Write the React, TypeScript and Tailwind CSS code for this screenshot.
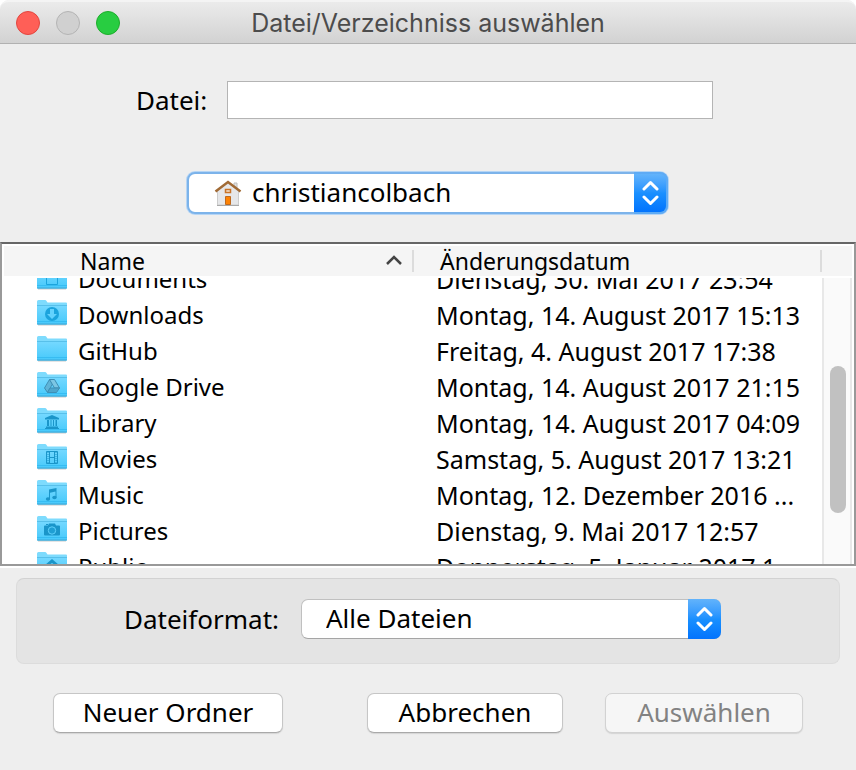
import { useLayoutEffect, useRef, type ReactNode } from "react";

type Entry = { name: string; date: string; glyph?: ReactNode };

const documentsGlyph = (
  <path d="M9.500 7.500h8l3 3v10h-11z" fill="none" stroke="#1ba4dd" />
);
const downloadsGlyph = (
  <>
    <circle cx="15" cy="14" r="7" fill="#1ba4dd" />
    <path d="M13 9h4v5h3l-5 5-5-5h3z" fill="#62d2fd" />
  </>
);
const driveGlyph = (
  <g stroke="#3f8fb5" strokeWidth="1" strokeLinejoin="round">
    <path d="M12.500 7.500 7.500 16l3 4.500 5-8.500z" fill="#5fb4d8" />
    <path d="M12.500 7.500h5l5 8.500h-5z" fill="#7cc6e4" />
    <path d="M13 16h9.500l-3 4.500h-9z" fill="#4da5cc" />
  </g>
);
const libraryGlyph = (
  <path
    d="M15 7l7 3v1.500H8V10zM10 12h2v6h-2zM13.500 12h1v6h-1zM16 12h1v6h-1zM18.500 12h1.500v6h-1.500zM9 18.500h12V20H9zM8 20h14v1H8z"
    fill="#1a95c9"
  />
);
const moviesGlyph = (
  <g fill="none" stroke="#1a95c9">
    <path d="M9.500 7.500h11v12h-11zM12.500 7.500v12M17.500 7.500v12M12.500 13.500h5" />
    <path d="M11 8v12M19 8v12" strokeDasharray="1 1" />
  </g>
);
const musicGlyph = (
  <g fill="#1a95c9">
    <path d="M12 9.500 19.500 8v9h-1v-5.500L13 12.700V19h-1z" />
    <ellipse cx="11" cy="19" rx="2.200" ry="1.800" />
    <ellipse cx="17.500" cy="17.500" rx="2.200" ry="1.800" />
  </g>
);
const picturesGlyph = (
  <>
    <path
      d="M7 10.500q0-1 1-1h3l1-2h6l1 2h3q1 0 1 1v8q0 1-1 1H8q-1 0-1-1zM9 8h2v1H9z"
      fill="#1a95c9"
    />
    <circle cx="15" cy="14.500" r="3.700" fill="#1f9fd4" stroke="#5fd0fb" />
  </>
);
const publicGlyph = (
  <path d="M15 7l7 6-2 1.500-5-3.500-5 3.500L8 13z" fill="#1a95c9" />
);

const entries: Entry[] = [
  { name: "Documents", date: "Dienstag, 30. Mai 2017 23:54", glyph: documentsGlyph },
  { name: "Downloads", date: "Montag, 14. August 2017 15:13", glyph: downloadsGlyph },
  { name: "GitHub", date: "Freitag, 4. August 2017 17:38" },
  { name: "Google Drive", date: "Montag, 14. August 2017 21:15", glyph: driveGlyph },
  { name: "Library", date: "Montag, 14. August 2017 04:09", glyph: libraryGlyph },
  { name: "Movies", date: "Samstag, 5. August 2017 13:21", glyph: moviesGlyph },
  { name: "Music", date: "Montag, 12. Dezember 2016 ...", glyph: musicGlyph },
  { name: "Pictures", date: "Dienstag, 9. Mai 2017 12:57", glyph: picturesGlyph },
  { name: "Public", date: "Donnerstag, 5. Januar 2017 1...", glyph: publicGlyph },
];

function FolderIcon({ glyph }: { glyph?: ReactNode }) {
  return (
    <svg className="mt-0.5 h-[26px] w-[30px] shrink-0" viewBox="0 0 30 26" aria-hidden="true">
      <defs>
        <linearGradient id="folder" x1="0" y1="0" x2="0" y2="1">
          <stop offset="0" stopColor="#74d8ff" />
          <stop offset="1" stopColor="#45c9fb" />
        </linearGradient>
      </defs>
      <path d="M1 24h28v1.500H1z" fill="#c9c9c9" />
      <path d="M0 1.500Q0 0 1.500 0H8q1 0 1.500 1l1 1.500H29q1 0 1 1V24H0z" fill="#7edbfd" />
      <path d="M0 6h30v17.500q0 1-1 1H1q-1 0-1-1z" fill="url(#folder)" />
      <path d="M0 5.500h30" stroke="#58c0ea" />
      <path d="M0 21.500h30" stroke="#37bcf2" />
      <path d="M0 24h30" stroke="#3fa9d8" />
      {glyph}
    </svg>
  );
}

function HomeIcon() {
  return (
    <svg
      className="pointer-events-none absolute top-[7px] left-[27px] size-7"
      viewBox="0 0 28 28"
      aria-hidden="true"
    >
      <path d="M20 4h3v7h-3z" fill="#e2e2e2" stroke="#bdbdbd" />
      <path d="M14 3 24.500 12v14h-21V12z" fill="#e6e7e9" stroke="#cccccc" />
      <path d="M3 26.500h22" stroke="#a9a9a9" />
      <path d="M1.500 12.500 14 3 26.500 12.500" fill="none" stroke="#a16a35" strokeWidth="2.500" />
      <path d="M11.500 10.500h5v3h-5z" fill="#f3e3d0" stroke="#c9742a" strokeWidth="1.500" />
      <path d="M11.500 17.500h5v8h-5z" fill="#fd8204" stroke="#bf6a1e" />
    </svg>
  );
}

function Stepper({ className }: { className: string }) {
  return (
    <span
      className={`pointer-events-none absolute inset-y-0 right-0 flex items-center justify-center bg-linear-to-b from-[#62b3fb] via-[#1a90ff] to-[#0373fd] ${className}`}
    >
      <svg className="h-[26px] w-[17px]" viewBox="0 0 17 26" fill="none" stroke="#fff" strokeWidth="3" strokeLinecap="round" strokeLinejoin="round" aria-hidden="true">
        <path d="M2 9l6.500-6.500L15 9M2 17l6.500 6.500L15 17" />
      </svg>
    </span>
  );
}

const buttonClass =
  "h-10 rounded-[7px] border border-[#c6c6c6] border-b-[#a9a9a9] bg-white pb-0.5 text-[26px] leading-9 shadow-[0_1px_1px_#d4d4d4] disabled:border-[#d2d2d2] disabled:bg-[#f6f6f6] disabled:text-[#828282]";

export default function App() {
  const listRef = useRef<HTMLDivElement>(null);

  useLayoutEffect(() => {
    if (listRef.current) listRef.current.scrollTop = 16;
  }, []);

  return (
    <div className="bg-white">
      <main className="min-h-screen rounded-t-[9px] bg-[#eeeeee] font-['Noto_Sans',sans-serif] text-[26px] leading-9 text-black">
        <header className="relative flex h-11 items-center justify-center rounded-t-[9px] border-t-2 border-b border-t-[#f4f4f4] border-b-[#b1b1b1] bg-linear-to-b from-[#ebebeb] to-[#d2d2d2]">
          <div className="absolute left-4 flex gap-4">
            <button type="button" aria-label="Schließen" className="size-6 rounded-full border border-[#e2463f] bg-[#ff5f57]" />
            <button type="button" aria-label="Minimieren" disabled className="size-6 rounded-full border border-[#b4b4b4] bg-[#d0d0d0]" />
            <button type="button" aria-label="Vergrößern" className="size-6 rounded-full border border-[#1dad2b] bg-[#28cd41]" />
          </div>
          <h1 className="font-['Inter',sans-serif] text-[25px] leading-9 text-[#4c4c4c]">
            Datei/Verzeichniss auswählen
          </h1>
        </header>

        <div className="mr-[143px] ml-[136px] flex items-center pt-[37px]">
          <label htmlFor="file" className="w-[91px] shrink-0">
            Datei:
          </label>
          <input id="file" type="text" className="h-[38px] min-w-0 flex-1 border border-[#b4b4b4] bg-white px-2 outline-none" />
        </div>

        <div className="relative mr-[188px] ml-[187px] mt-[53px] h-[42px]">
          <select aria-label="Verzeichnis" className="size-full appearance-none rounded-lg border-2 border-[#7cb3ea] bg-white pb-0.5 pl-[63px] text-[26px] leading-9 shadow-[0_0_0_1px_#b5d5f5] outline-none">
            <option>christiancolbach</option>
          </select>
          <HomeIcon />
          <Stepper className="w-[34px] rounded-r-lg border-y-2 border-r-2 border-[#5eabf5]" />
        </div>

        <section className="relative mt-7 h-[324px] border-2 border-t-[#666666] border-r-[#999999] border-b-[#999999] border-l-[#999999] bg-white px-0.5 shadow-[0_2px_0_#ffffff]">
          <div ref={listRef} className="h-full overflow-y-auto [scrollbar-width:none]">
            <table className="w-full table-fixed border-separate border-spacing-0 text-left text-[24px] leading-8">
              <colgroup>
                <col className="w-[410px]" />
                <col />
                <col className="w-[30px]" />
              </colgroup>
              <thead className="sticky top-0 z-10 text-[23px] leading-[30px]">
                <tr>
                  <th className="border-y-2 border-white bg-[#f5f5f5] p-0 font-normal">
                    <div className="flex h-[30px] items-center justify-between pl-[76px]">
                      Name
                      <div className="flex h-[22px] items-center border-r-2 border-[#dcdcdc] pr-2.5">
                        <svg className="h-3 w-4" viewBox="0 0 16 12" fill="none" stroke="#444" strokeWidth="2.500" aria-hidden="true">
                          <path d="M1 9l7-7 7 7" />
                        </svg>
                      </div>
                    </div>
                  </th>
                  <th className="border-y-2 border-white bg-[#f5f5f5] p-0 font-normal">
                    <div className="flex h-[30px] items-center justify-between pl-[26px]">
                      Änderungsdatum
                      <div className="h-[22px] border-r-2 border-[#dcdcdc]" />
                    </div>
                  </th>
                  <td className="border-y-2 border-white bg-[#f5f5f5] p-0" />
                </tr>
              </thead>
              <tbody>
                {entries.map((entry) => (
                  <tr key={entry.name} className="h-9">
                    <td className="p-0 pl-[33px]">
                      <div className="flex h-9 gap-[11px]">
                        <FolderIcon glyph={entry.glyph} />
                        <span className="pt-px">{entry.name}</span>
                      </div>
                    </td>
                    <td className="p-0 pl-[22px] text-[25px] whitespace-nowrap">
                      <div className="h-9 pt-px">{entry.date}</div>
                    </td>
                    <td className="p-0" />
                  </tr>
                ))}
              </tbody>
            </table>
          </div>
          <div className="absolute top-[34px] right-0.5 bottom-0 w-[30px] border-x-2 border-[#e8e8e8] bg-[#fafafa]">
            <div className="mt-[88px] ml-1.5 h-[147px] w-4 rounded-full bg-[#c1c1c1]" />
          </div>
        </section>

        <section className="mx-4 mt-3 flex h-[86px] items-center rounded-lg border border-[#dcdcdc] border-t-[#d2d2d2] bg-[#e4e4e4] pb-1 pl-[107px]">
          <label htmlFor="format" className="w-[177px] shrink-0">
            Dateiformat:
          </label>
          <div className="relative mr-[118px] h-10 min-w-0 flex-1">
            <select id="format" className="size-full appearance-none rounded-[7px] border border-[#c0c0c0] border-b-[#a5a5a5] bg-white pb-0.5 pl-6 text-[26px] leading-9 outline-none">
              <option>Alle Dateien</option>
            </select>
            <Stepper className="w-[33px] rounded-r-[7px]" />
          </div>
        </section>

        <footer className="mx-[53px] flex pt-[29px] pb-9">
          <button type="button" className={`w-[230px] ${buttonClass}`}>
            Neuer Ordner
          </button>
          <button type="button" className={`mr-[42px] ml-auto w-[196px] ${buttonClass}`}>
            Abbrechen
          </button>
          <button type="button" disabled className={`w-[198px] ${buttonClass}`}>
            Auswählen
          </button>
        </footer>
      </main>
    </div>
  );
}
